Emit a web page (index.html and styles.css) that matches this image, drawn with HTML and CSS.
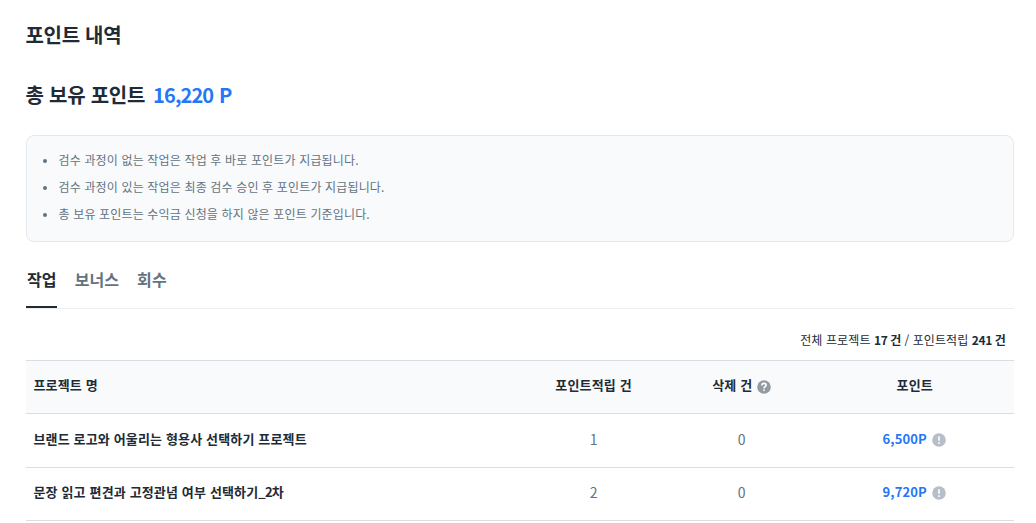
FILE: index.html
```html
<!DOCTYPE html>
<html lang="ko">
<head>
    <meta charset="UTF-8">
    <meta name="viewport" content="width=device-width, initial-scale=1.0">
    <title>포인트 내역</title>
    <link rel="stylesheet" href="styles.css">
</head>
<body>

    <div class="container">
        <h1 class="title">포인트 내역</h1>
        <h2 class="total">총 보유 포인트<span class="total-point">16,220 P</span></h2>

        <!-- Notice -->
        <ul class="notice">
            <li>검수 과정이 없는 작업은 작업 후 바로 포인트가 지급됩니다.</li>
            <li>검수 과정이 있는 작업은 최종 검수 승인 후 포인트가 지급됩니다.</li>
            <li>총 보유 포인트는 수익금 신청을 하지 않은 포인트 기준입니다.</li>
        </ul>

        <!-- Tabs -->
        <div class="tabs">
            <div class="tab active">작업</div>
            <div class="tab">보너스</div>
            <div class="tab">회수</div>
        </div>

        <p class="summary">전체 프로젝트 <b>17 건</b> / 포인트적립 <b>241 건</b></p>

        <!-- Point list -->
        <table class="point-table">
            <thead>
                <tr>
                    <th class="col-name">프로젝트 명</th>
                    <th class="col-count">포인트적립 건</th>
                    <th class="col-count">삭제 건<svg class="icon icon-help" viewBox="0 0 14 14"><circle cx="7" cy="7" r="6.8"/><path d="M4.9 5.5C4.9 4.2 5.8 3.4 7 3.4s2.1.8 2.1 1.9C9.1 6.7 7 6.8 7 8.4M7 9.6v1.5"/></svg></th>
                    <th class="col-point">포인트</th>
                </tr>
            </thead>
            <tbody>
                <tr>
                    <td class="name">브랜드 로고와 어울리는 형용사 선택하기 프로젝트</td>
                    <td>1</td>
                    <td>0</td>
                    <td class="point">6,500P<svg class="icon icon-info" viewBox="0 0 14 14"><circle cx="7" cy="7" r="6.8"/><path d="M7 3.2v4.6M7 9.2v1.7"/></svg></td>
                </tr>
                <tr>
                    <td class="name">문장 읽고 편견과 고정관념 여부 선택하기<span class="suffix">_2차</span></td>
                    <td>2</td>
                    <td>0</td>
                    <td class="point">9,720P<svg class="icon icon-info" viewBox="0 0 14 14"><circle cx="7" cy="7" r="6.8"/><path d="M7 3.2v4.6M7 9.2v1.7"/></svg></td>
                </tr>
            </tbody>
        </table>
    </div>

</body>
</html>
```
FILE: styles.css
```css
* {
    margin: 0;
    padding: 0;
    box-sizing: border-box;
}

body {
    font-family: 'Noto Sans CJK KR', sans-serif;
    background: #fff;
    color: #212b36;
    overflow: hidden;
}

.container {
    padding: 20px 22px 0 26px;
}

.title,
.total {
    font-size: 20px;
    line-height: 30px;
    font-weight: bold;
    letter-spacing: -0.3px;
    text-indent: -0.5px;
}

.total {
    margin-top: 30px;
    letter-spacing: -0.25px;
}

.total-point {
    margin-left: 8px;
    letter-spacing: -0.9px;
    word-spacing: 1px;
    color: #2577f7;
}

/* Notice */
.notice {
    height: 107px;
    margin-top: 25px;
    padding: 10px 31px;
    border: 1px solid #e5e8eb;
    border-radius: 8px;
    background: #f9fafc;
    font-size: 12px;
    line-height: 27px;
    letter-spacing: 0.15px;
    color: #637381;
}

.notice li {
    padding-left: 0.5px;
}

.notice li::marker {
    font-size: 11px;
}

/* Tabs */
.tabs {
    display: flex;
    gap: 17px;
    height: 67px;
    border-bottom: 1px solid #ebedef;
    font-size: 16px;
    line-height: 24px;
    letter-spacing: 0.1px;
    font-weight: bold;
}

.tab {
    height: 66px;
    padding: 25px 0 0 1px;
    color: #637381;
}

.tab.active {
    color: #212b36;
    border-bottom: 2px solid #212b36;
}

.summary {
    padding: 21px 8.5px 10px 0;
    font-size: 12px;
    line-height: 20px;
    letter-spacing: 0.1px;
    text-align: right;
}

.summary b {
    letter-spacing: -0.4px;
}

/* Table */
.point-table {
    width: 100%;
    table-layout: fixed;
    border-collapse: collapse;
    font-size: 13px;
    line-height: 20px;
    letter-spacing: 0.15px;
}

.point-table th,
.point-table td {
    height: 53.5px;
    padding: 0 8px 3px 7px;
    border-top: 1px solid #dadde1;
    border-bottom: 1px solid #dadde1;
    text-align: center;
    vertical-align: middle;
}

.point-table th {
    height: 53px;
    padding-bottom: 4px;
    background: #f9fafc;
}

.point-table td {
    font-size: 14px;
    color: #637381;
}

.point-table .col-name,
.point-table .name {
    padding-left: 7.5px;
    text-align: left;
    font-weight: bold;
    color: #212b36;
}

.col-name {
    width: 50%;
}

.col-count {
    width: 15%;
}

.col-point {
    width: 20%;
}

.point-table .name,
.point-table .point {
    font-size: 13px;
}

.suffix {
    letter-spacing: -0.8px;
}

.point-table .point {
    padding-right: 9px;
    font-weight: bold;
    letter-spacing: 0.1px;
    color: #2577f7;
}

/* Icons */
.icon {
    width: 14px;
    height: 14px;
    margin-left: 5px;
    vertical-align: -3px;
    fill: #b6bec8;
}

.icon path {
    fill: none;
    stroke: #fff;
    stroke-width: 1.6;
}

.icon-help {
    vertical-align: -4px;
    fill: #919ba4;
}
```
